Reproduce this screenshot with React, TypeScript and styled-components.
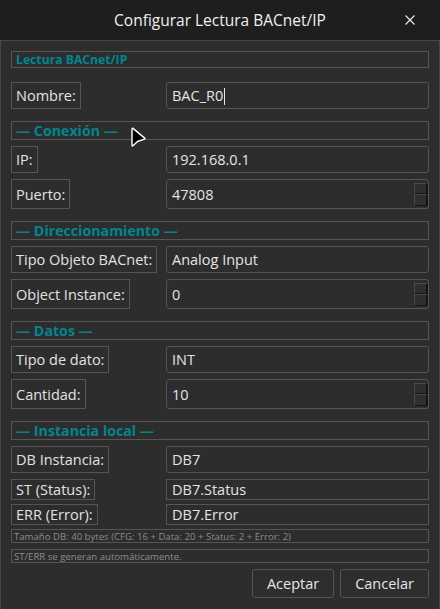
import React from "react";
import styled, { createGlobalStyle } from "styled-components";

const GlobalStyle = createGlobalStyle`
  html, body { margin: 0; padding: 0; background: #2d2d2d; }
  body { font-family: "Open Sans", "Noto Sans", "DejaVu Sans", sans-serif; color: #dedede; }
  * { box-sizing: border-box; }
`;

const Window = styled.div`
  position: relative;
  width: 440px;
  height: 609px;
  display: flex;
  flex-direction: column;
  background: #2d2d2d;
  overflow: hidden;
`;

const TitleBar = styled.div`
  height: 40px;
  flex: none;
  background: #1e1e1e;
  display: grid;
  grid-template-columns: 1fr auto 1fr;
  align-items: center;
`;

const Title = styled.div`
  grid-column: 2;
  font-size: 15.5px;
  font-weight: 500;
  color: #f0f0f0;
`;

const CloseButton = styled.button`
  grid-column: 3;
  justify-self: end;
  margin-right: 16px;
  width: 28px;
  height: 28px;
  border: none;
  background: transparent;
  display: flex;
  align-items: center;
  justify-content: center;
  padding: 0;
`;

const Body = styled.div`
  flex: 1;
  border: 1px solid #474747;
  padding: 10px 10px 11px 10px;
  display: flex;
  flex-direction: column;
  gap: 6px;
`;

const SectionTitle = styled.div<{ $first?: boolean }>`
  height: ${(p) => (p.$first ? 17 : 19)}px;
  border: 1px solid #555555;
  padding-left: 4px;
  display: flex;
  align-items: center;
  color: #00868f;
  font-weight: 700;
  font-size: ${(p) => (p.$first ? 12.2 : 14.2)}px;
  margin-top: ${(p) => (p.$first ? 0 : 6)}px;
  margin-bottom: ${(p) => (p.$first ? 8 : 0)}px;
  white-space: nowrap;
`;

const Row = styled.div<{ $h: number }>`
  display: grid;
  grid-template-columns: 155px 1fr;
  height: ${(p) => p.$h}px;
`;

const Label = styled.div`
  justify-self: start;
  border: 1px solid #555555;
  padding: 0 4px;
  display: flex;
  align-items: center;
  font-size: 14.5px;
  color: #e2e2e2;
  white-space: nowrap;
`;

const Field = styled.div<{ $square?: boolean }>`
  border: 1px solid #555555;
  border-radius: ${(p) => (p.$square ? 0 : 3)}px;
  padding: 0 0 0 5px;
  display: flex;
  align-items: center;
  font-size: 14.5px;
  color: #e4e4e4;
  background: #2d2d2d;
`;

const FieldText = styled.span`
  flex: 1;
  white-space: nowrap;
`;

const Caret = styled.span`
  display: inline-block;
  width: 1px;
  height: 17px;
  background: #e8e8e8;
  vertical-align: middle;
  margin-left: 1px;
`;

const SpinCol = styled.div`
  display: flex;
  flex-direction: column;
  align-self: center;
`;

const SpinBtn = styled.div`
  width: 14px;
  height: 11.5px;
  background: #2f2f2f;
  border-top: 1px solid #4a4a4a;
  border-left: 1px solid #4a4a4a;
  border-right: 2px solid #141414;
  border-bottom: 1px solid #141414;
`;

const Info = styled.div`
  height: 14px;
  border: 1px solid #555555;
  padding-left: 2px;
  display: flex;
  align-items: center;
  font-size: 9.6px;
  color: #8c8c8c;
  white-space: nowrap;
`;

const ButtonRow = styled.div`
  display: flex;
  justify-content: flex-end;
  gap: 6px;
`;

const Button = styled.button`
  height: 29px;
  padding: 0 14px;
  border: 1px solid #555555;
  border-radius: 3px;
  background: #2e2e2e;
  color: #e6e6e6;
  font-family: inherit;
  font-size: 14.5px;
`;

const Cursor = styled.svg`
  position: absolute;
  left: 128px;
  top: 125px;
  pointer-events: none;
`;

type FieldRowProps = { label: string; value: string; spin?: boolean; caret?: boolean };

function FieldRow({ label, value, spin, caret }: FieldRowProps) {
  return (
    <Row $h={spin ? 30 : 27}>
      <Label>{label}</Label>
      <Field>
        <FieldText>
          {value}
          {caret && <Caret />}
        </FieldText>
        {spin && (
          <SpinCol>
            <SpinBtn />
            <SpinBtn />
          </SpinCol>
        )}
      </Field>
    </Row>
  );
}

function SmallRow({ label, value }: { label: string; value: string }) {
  return (
    <Row $h={19}>
      <Label>{label}</Label>
      <Field $square>
        <FieldText>{value}</FieldText>
      </Field>
    </Row>
  );
}

export default function App() {
  return (
    <>
      <GlobalStyle />
      <Window>
        <TitleBar>
          <Title>Configurar Lectura BACnet/IP</Title>
          <CloseButton aria-label="Cerrar">
            <svg width="12" height="12" viewBox="0 0 12 12">
              <path d="M1.5 1.5 L10.5 10.5 M10.5 1.5 L1.5 10.5" stroke="#e8e8e8" strokeWidth="1.2" />
            </svg>
          </CloseButton>
        </TitleBar>
        <Body>
          <SectionTitle $first>Lectura BACnet/IP</SectionTitle>
          <FieldRow label="Nombre:" value="BAC_R0" caret />
          <SectionTitle>— Conexión —</SectionTitle>
          <FieldRow label="IP:" value="192.168.0.1" />
          <FieldRow label="Puerto:" value="47808" spin />
          <SectionTitle>— Direccionamiento —</SectionTitle>
          <FieldRow label="Tipo Objeto BACnet:" value="Analog Input" />
          <FieldRow label="Object Instance:" value="0" spin />
          <SectionTitle>— Datos —</SectionTitle>
          <FieldRow label="Tipo de dato:" value="INT" />
          <FieldRow label="Cantidad:" value="10" spin />
          <SectionTitle>— Instancia local —</SectionTitle>
          <FieldRow label="DB Instancia:" value="DB7" />
          <SmallRow label="ST (Status):" value="DB7.Status" />
          <SmallRow label="ERR (Error):" value="DB7.Error" />
          <Info>Tamaño DB: 40 bytes (CFG: 16 + Data: 20 + Status: 2 + Error: 2)</Info>
          <Info>ST/ERR se generan automáticamente.</Info>
          <ButtonRow>
            <Button>Aceptar</Button>
            <Button>Cancelar</Button>
          </ButtonRow>
        </Body>
        <Cursor width="22" height="24" viewBox="0 0 22 24">
          <path
            d="M4 4 L4 20.5 Q4 21.5 5 20.8 L9.5 16.5 L16.5 14.2 Q17.5 13.8 16.7 13.1 L5 3.4 Q4 2.8 4 4 Z"
            fill="#000"
            stroke="#fff"
            strokeWidth="1.4"
            strokeLinejoin="round"
          />
        </Cursor>
      </Window>
    </>
  );
}
